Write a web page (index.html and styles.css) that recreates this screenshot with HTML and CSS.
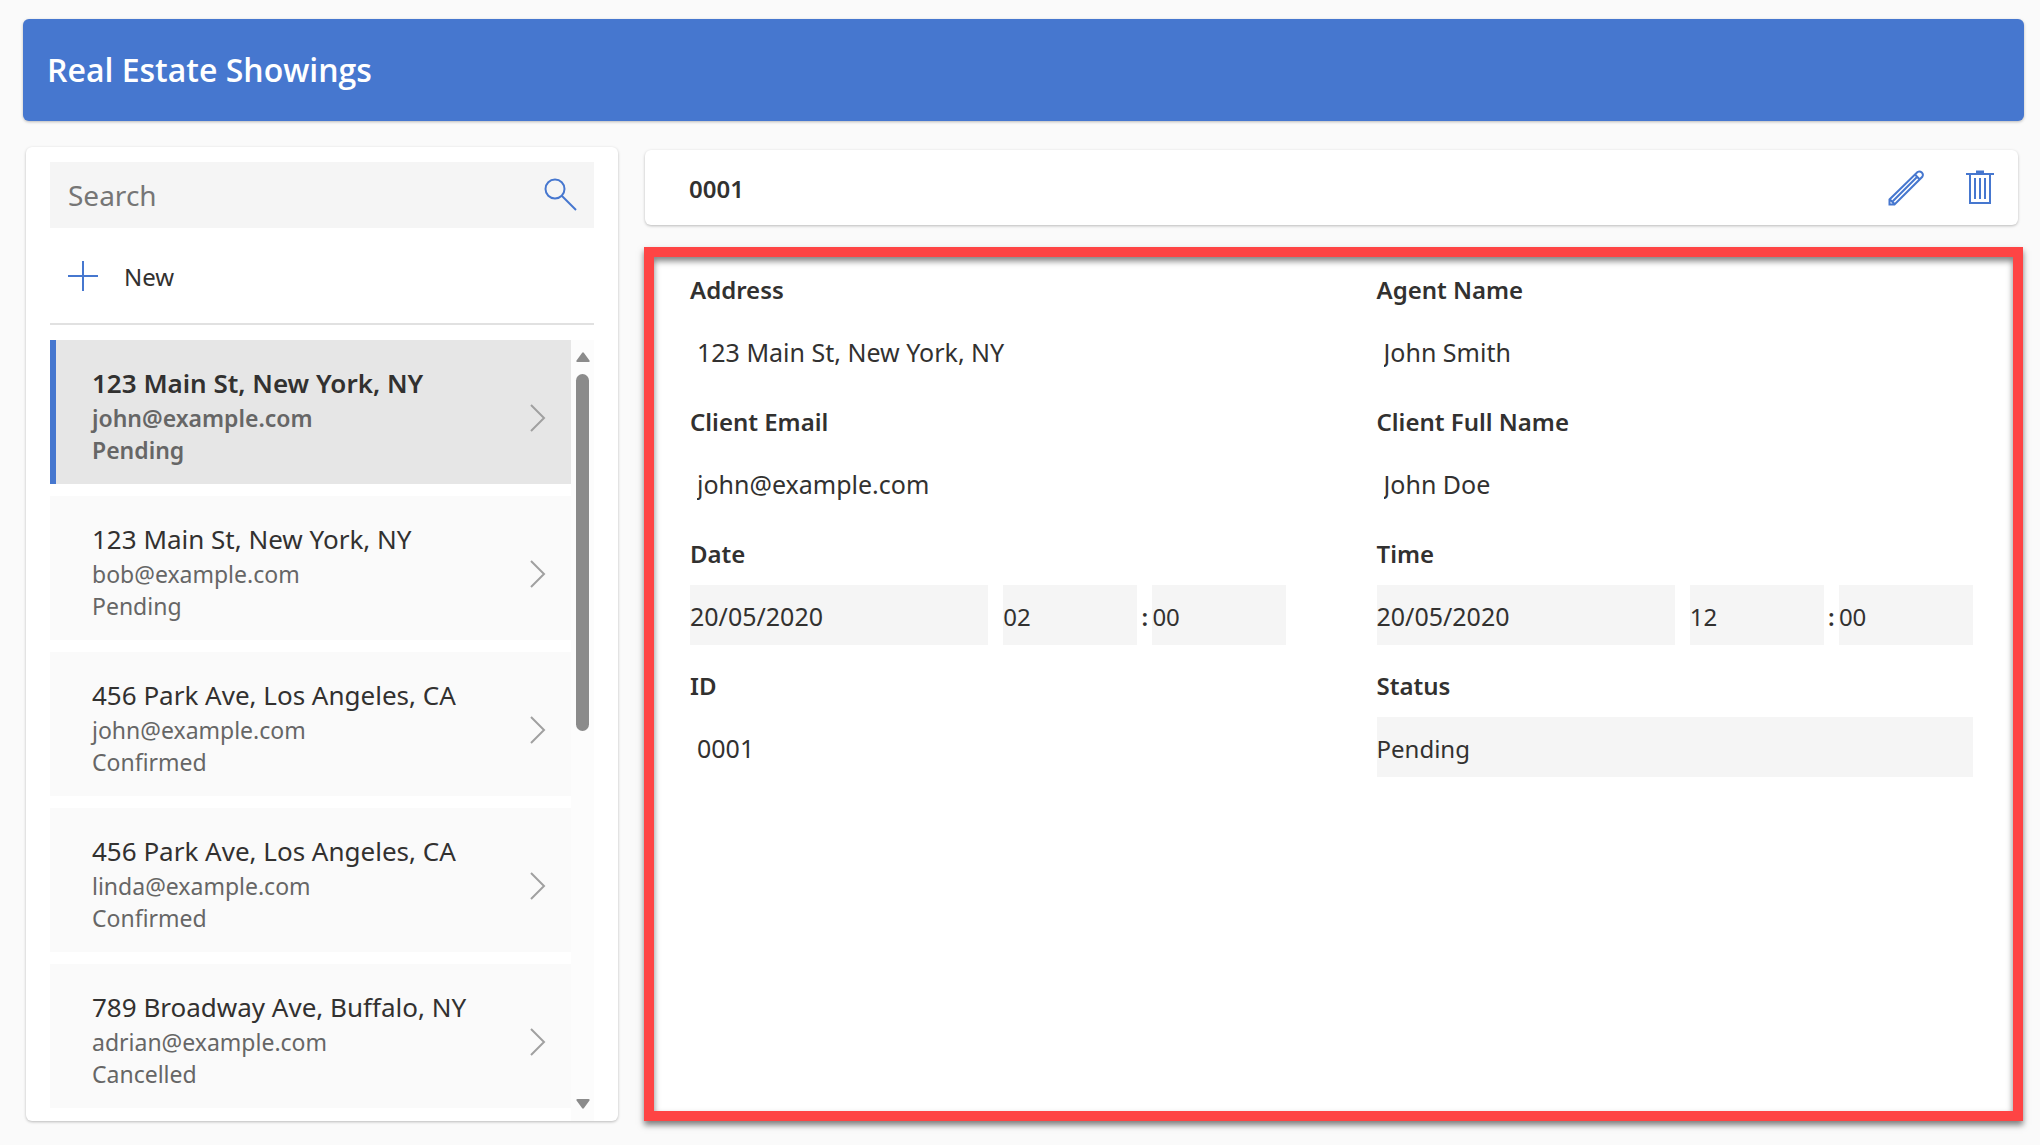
FILE: index.html
```html
<!DOCTYPE html>
<html lang="en">
<head>
<meta charset="utf-8">
<meta name="viewport" content="width=device-width, initial-scale=1">
<title>Real Estate Showings</title>
<link rel="stylesheet" href="styles.css">
</head>
<body>
<div class="app">
  <header class="banner"><h1 class="banner-title">Real Estate Showings</h1></header>
  <div class="workspace">
    <aside class="sidebar">
      <div class="search">
        <input class="search-input" type="text" placeholder="Search" aria-label="Search showings">
        <button class="search-button" type="button" aria-label="Search">
          <svg width="34" height="34" viewBox="0 0 34 34" fill="none" stroke="currentColor" stroke-width="2"><circle cx="11" cy="11" r="9.500"/><path d="M18 18L32 32"/></svg>
        </button>
      </div>
      <button class="new-button" type="button">
        <svg width="30" height="30" viewBox="0 0 30 30" fill="none" stroke="currentColor" stroke-width="2"><path d="M15 0V30M0 15H30"/></svg>
        <span class="new-label">New</span>
      </button>
      <div class="list-area">
        <ul class="list">
          <li><button type="button" class="item selected"><span class="item-text"><span class="item-title">123 Main St, New York, NY</span><span class="item-sub">john@example.com</span><span class="item-sub">Pending</span></span><svg class="chevron" width="16" height="28" viewBox="0 0 16 28"><path d="M1 1L14 14L1 27"/></svg></button></li>
          <li><button type="button" class="item"><span class="item-text"><span class="item-title">123 Main St, New York, NY</span><span class="item-sub">bob@example.com</span><span class="item-sub">Pending</span></span><svg class="chevron" width="16" height="28" viewBox="0 0 16 28"><path d="M1 1L14 14L1 27"/></svg></button></li>
          <li><button type="button" class="item"><span class="item-text"><span class="item-title">456 Park Ave, Los Angeles, CA</span><span class="item-sub">john@example.com</span><span class="item-sub">Confirmed</span></span><svg class="chevron" width="16" height="28" viewBox="0 0 16 28"><path d="M1 1L14 14L1 27"/></svg></button></li>
          <li><button type="button" class="item"><span class="item-text"><span class="item-title">456 Park Ave, Los Angeles, CA</span><span class="item-sub">linda@example.com</span><span class="item-sub">Confirmed</span></span><svg class="chevron" width="16" height="28" viewBox="0 0 16 28"><path d="M1 1L14 14L1 27"/></svg></button></li>
          <li><button type="button" class="item"><span class="item-text"><span class="item-title">789 Broadway Ave, Buffalo, NY</span><span class="item-sub">adrian@example.com</span><span class="item-sub">Cancelled</span></span><svg class="chevron" width="16" height="28" viewBox="0 0 16 28"><path d="M1 1L14 14L1 27"/></svg></button></li>
        </ul>
        <div class="scrollbar" aria-hidden="true">
          <svg width="14" height="10" viewBox="0 0 14 10"><path d="M6 1Q7 -.6 8 1L13.500 8.500Q14 10 12.500 10H1.500Q0 10 .5 8.500Z"/></svg>
          <div class="track"><div class="thumb"></div></div>
          <svg width="14" height="10" viewBox="0 0 14 10"><path d="M6 9Q7 10.600 8 9L13.500 1.500Q14 0 12.500 0H1.500Q0 0 .5 1.500Z"/></svg>
        </div>
      </div>
    </aside>
    <main class="detail">
      <div class="record-bar">
        <h2 class="record-title">0001</h2>
        <button class="icon-button" type="button" aria-label="Edit">
          <svg width="36" height="36" viewBox="0 0 36 36" fill="none" stroke="currentColor" stroke-width="2"><path d="M1.500 34.500V29.500L29.500 2A3.500 3.500 0 0 1 34.300 6.800L6.500 34.500ZM2 29.500L6.500 34M27 4.500L31.500 9.300M5 31L29 7"/></svg>
        </button>
        <button class="icon-button" type="button" aria-label="Delete">
          <svg width="28" height="36" viewBox="0 0 28 36" fill="none" stroke="currentColor" stroke-width="2"><path d="M0 4H28M4 5V33H24V5M9 8V29M14 8V29M19 8V29"/><path d="M10 2H18" stroke-width="3"/></svg>
        </button>
      </div>
      <form class="record">
        <div class="field"><label for="address">Address</label><input class="text" id="address" type="text" value="123 Main St, New York, NY" readonly></div>
        <div class="field"><label for="agent">Agent Name</label><input class="text" id="agent" type="text" value="John Smith" readonly></div>
        <div class="field"><label for="email">Client Email</label><input class="text" id="email" type="text" value="john@example.com" readonly></div>
        <div class="field"><label for="client">Client Full Name</label><input class="text" id="client" type="text" value="John Doe" readonly></div>
        <div class="field"><label for="date">Date</label>
          <div class="datetime">
            <input class="box" id="date" type="text" value="20/05/2020" readonly>
            <select class="box hour" aria-label="Date hour"><option>02</option></select>
            <span class="colon">:</span>
            <select class="box" aria-label="Date minute"><option>00</option></select>
          </div>
        </div>
        <div class="field"><label for="time">Time</label>
          <div class="datetime">
            <input class="box" id="time" type="text" value="20/05/2020" readonly>
            <select class="box hour" aria-label="Time hour"><option>12</option></select>
            <span class="colon">:</span>
            <select class="box" aria-label="Time minute"><option>00</option></select>
          </div>
        </div>
        <div class="field"><label for="record-id">ID</label><input class="text" id="record-id" type="text" value="0001" readonly></div>
        <div class="field"><label for="status">Status</label><select class="box" id="status"><option>Pending</option></select></div>
      </form>
    </main>
  </div>
</div>
</body>
</html>
```
FILE: styles.css
```css
:root {
  --blue: #4677cf;
  --ink: #323130;
  --fill: #f5f5f5;
  --shadow: 0 1px 3px rgba(0, 0, 0, 0.26);
}

* { box-sizing: border-box; }

body {
  margin: 0;
  background: #fafafa;
  color: var(--ink);
  font: 24px/32px "Noto Sans", sans-serif;
}

button, input, select {
  font: inherit;
  color: inherit;
  border: 0;
  border-radius: 0;
  margin: 0;
  padding: 0;
  background: none;
}

h1, h2 { margin: 0; }
svg { display: block; flex: none; }

.app {
  min-height: 100vh;
  display: flex;
  flex-direction: column;
  gap: 26px;
  padding: 19px 16px 24px 23px;
}

.banner {
  display: flex;
  align-items: center;
  height: 102px;
  padding: 0 24px;
  border-radius: 6px;
  background: var(--blue);
  box-shadow: var(--shadow);
}

.banner-title {
  color: #fff;
  font: 600 32px/40px "Open Sans", sans-serif;
}

.workspace {
  flex: 1;
  display: grid;
  grid-template-columns: 592px minmax(0, 1fr);
  gap: 26px;
  padding: 0 1px 0 3px;
}

.sidebar {
  display: flex;
  flex-direction: column;
  padding: 15px 24px 0;
  border-radius: 6px;
  background: #fff;
  box-shadow: var(--shadow);
}

.search {
  display: flex;
  align-items: center;
  height: 66px;
  padding: 0 16px 0 18px;
  background: var(--fill);
}

.search-input {
  flex: 1;
  min-width: 0;
  height: 66px;
  font-size: 28px;
}

.search-input::placeholder { color: #767676; opacity: 1; }
.search-button, .icon-button { color: var(--blue); }

.new-button {
  display: flex;
  align-items: center;
  gap: 26px;
  height: 97px;
  padding: 0 18px;
  border-bottom: 2px solid #e1e1e1;
  text-align: left;
}

.new-button svg { color: var(--blue); }
.new-label { padding-top: 3px; }

.list-area {
  flex: 1;
  display: flex;
  margin-top: 15px;
}

.list {
  flex: 1;
  display: flex;
  flex-direction: column;
  gap: 12px;
  margin: 0;
  padding: 0 0 12px;
  list-style: none;
}

.item {
  display: flex;
  align-items: center;
  width: 100%;
  height: 144px;
  padding: 12px 25px 0 36px;
  border-left: 6px solid #fafafa;
  background: #fafafa;
  text-align: left;
}

.item.selected {
  border-left-color: var(--blue);
  background: #e6e6e6;
  font-weight: 600;
}

.item-text {
  flex: 1;
  display: flex;
  flex-direction: column;
  padding-bottom: 6px;
}

.item-title { font-size: 26px; line-height: 38px; }
.item-sub { color: #666; font-size: 23px; }

.chevron { fill: none; stroke: #a0a0a0; stroke-width: 2; }

.scrollbar {
  display: flex;
  flex-direction: column;
  align-items: center;
  gap: 12px;
  width: 23px;
  padding: 12px 0;
  background: #fcfcfc;
  fill: #8b8b8b;
}

.track { flex: 1; }

.thumb {
  width: 13px;
  height: 50%;
  border-radius: 7px;
  background: #8b8b8b;
}

.detail {
  display: flex;
  flex-direction: column;
  gap: 22px;
  padding-top: 3px;
}

.record-bar {
  display: flex;
  align-items: center;
  gap: 42px;
  height: 75px;
  margin: 0 5px 0 1px;
  padding: 0 24px 0 44px;
  border-radius: 6px;
  background: #fff;
  box-shadow: var(--shadow);
}

.record-title {
  flex: 1;
  padding-top: 2px;
  font-size: 24px;
  font-weight: 600;
}

.record {
  flex: 1;
  display: grid;
  grid-template-columns: repeat(2, minmax(0, 1fr));
  align-content: start;
  gap: 23px 90px;
  padding: 15px 40px 15px 36px;
  border: 10px solid #fe4444;
  background: #fff;
  box-shadow: 0 4px 6px rgba(0, 0, 0, 0.5), inset 0 4px 6px rgba(0, 0, 0, 0.5);
}

.field {
  display: flex;
  flex-direction: column;
  gap: 13px;
}

.field label { font-weight: 600; line-height: 36px; }

.text, .box {
  width: 100%;
  height: 60px;
  padding-top: 4px;
}

.field input { padding-top: 2px; font-size: 25px; }
.text { padding-left: 7px; }
.box { background: var(--fill); appearance: none; }

.datetime {
  display: grid;
  grid-template-columns: 298fr 15px 134fr 15px 134fr;
}

.hour { grid-column: 3; }

.colon {
  padding-top: 4px;
  font-weight: 600;
  line-height: 56px;
  text-align: center;
}
```
